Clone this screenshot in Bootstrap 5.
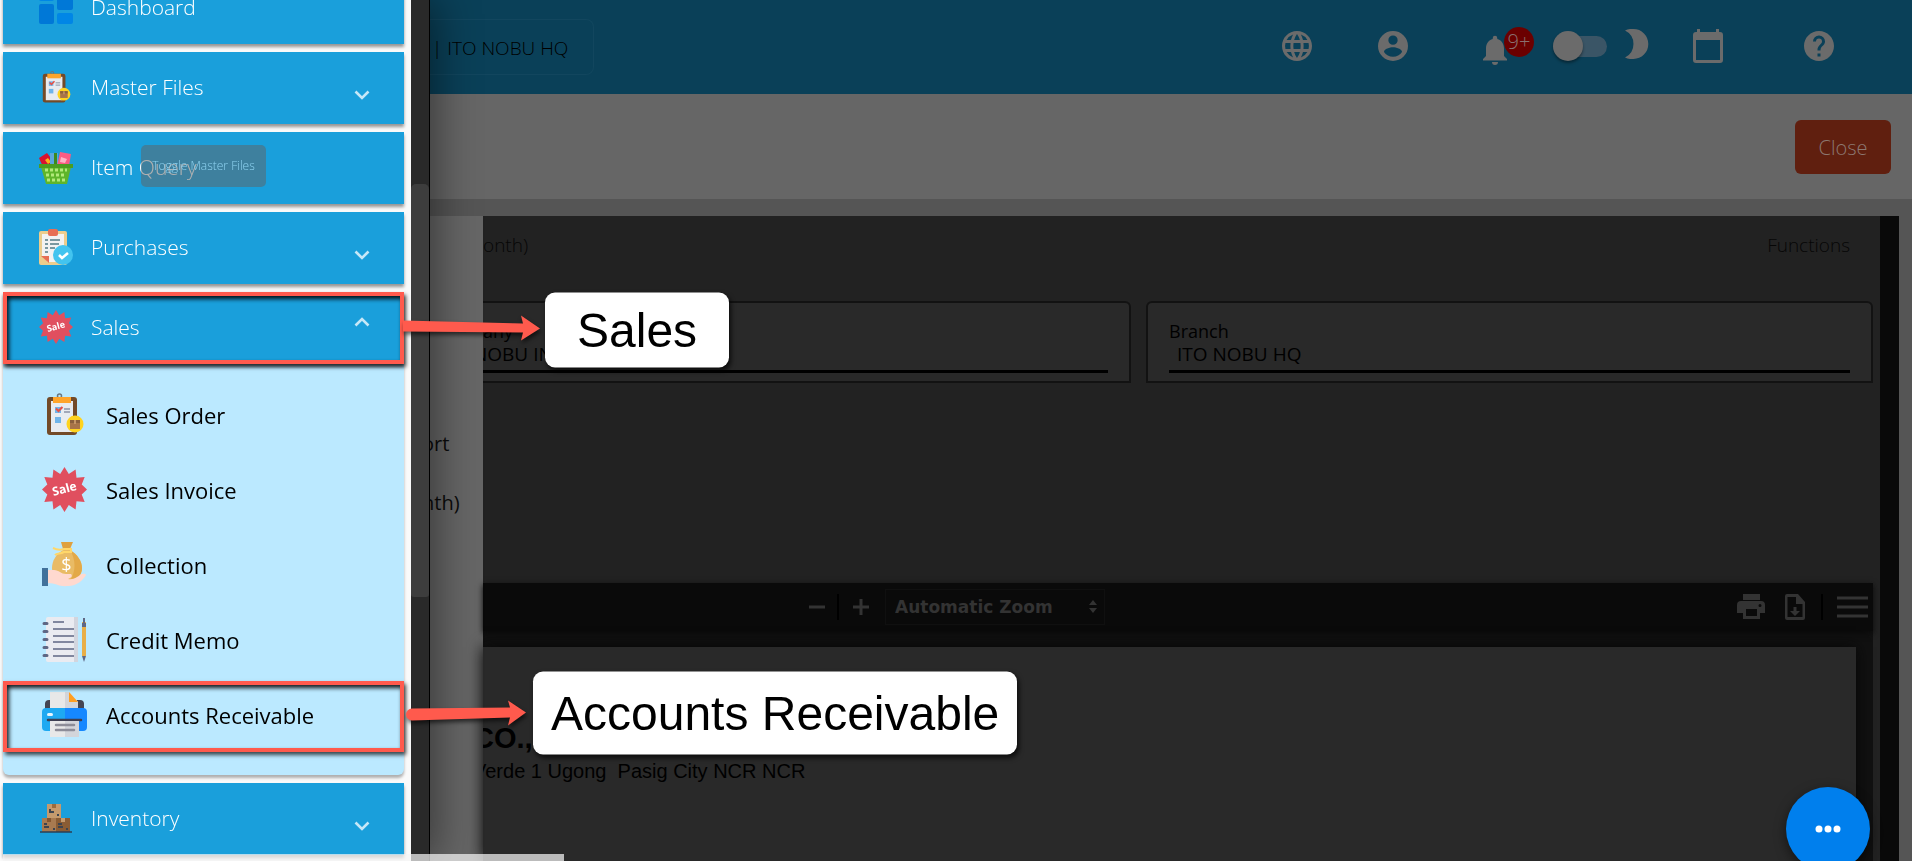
<!DOCTYPE html>
<html lang="en">
<head>
<meta charset="utf-8">
<meta name="viewport" content="width=device-width, initial-scale=1">
<title>Sales - Accounts Receivable</title>
<link href="https://cdn.jsdelivr.net/npm/bootstrap@5.3.0/dist/css/bootstrap.min.css" rel="stylesheet">
<style>
body{font-family:"Open Sans","Noto Sans",sans-serif;font-size:19px;font-weight:300;line-height:28px;color:#000;background:#555}
svg{display:block;flex-shrink:0}
button{font:inherit}
/* dimmed page */
.topbar{height:94px;background:#0a4058;color:#6b6b6b;padding-left:430px;padding-right:75px}
.site-box{height:56px;width:164px;border:1px solid #12465e;border-left:0;border-radius:0 8px 8px 0;color:#000;padding:1px 0 0 2px}
.tools{padding-bottom:2px}
.tools button,.viewer-bar button{background:none;border:0;padding:0;color:inherit}
.sp-globe{margin-right:12px}
.sp-user{margin-right:18px}
.sp-moon{margin-left:18px}
.sp-cal{margin-left:-4px}
.sp-help{margin-left:30px}
.notice{top:3px;left:27px;width:30px;height:30px;background:#6b0000;color:#8a7070;line-height:30px;border-radius:50%;font-size:20px}
.switch{appearance:none;width:54px;height:21px;border-radius:11px;background:#3a5566;position:relative;margin:0}
.switch::before{content:"";position:absolute;left:0;top:-5px;width:30px;height:30px;border-radius:50%;background:#6b6b6b;box-shadow:0 2px 3px rgba(0,0,0,.4)}
.actionbar{height:105px;background:#666;padding-right:21px}
.btn-close-page{width:96px;height:54px;background:#601f0f;color:#8c7871;border:0;border-radius:6px;font-size:20px;padding:2px 0 0}
.workspace{margin-top:17px;margin-right:13px;background:#222}
.report-nav{width:483px;background:#666;padding:214px 0 0 422px;font-size:20px;font-weight:400}
.report-nav a{color:#0b0b0b;text-decoration:none;line-height:28px;margin-bottom:31px}
.gutter{width:19px;background:#090909}
.report-head{height:85px;padding-top:15px;padding-right:30px;color:#060606}
.report-head a{color:#060606;text-decoration:none}
.fields{gap:15px;padding-right:7px}
.field-box{height:82px;background:#292929;border:2px solid #121212;border-radius:6px 6px 0 0;padding:16px 21px 0}
.field-first{flex:0 1 648px;border-left:0;border-top-left-radius:0;padding-left:0}
.field-box label{font-size:18px;line-height:24px;font-weight:400}
.field-box input{width:100%;height:30px;border:0;border-bottom:3px solid #000;background:none;padding:0 8px 6px;font-size:19px;line-height:22px;color:#000;outline:0;font-weight:400}
.field-box.field-first input{padding-left:0;text-indent:-10px}
.viewer{margin-top:200px;margin-right:7px;background:#111}
.viewer-bar{height:48px;background:#0a0a0a;color:#333;padding-left:326px;padding-right:5px;box-shadow:0 2px 6px #0a0a0a}
.viewer-bar select{appearance:none;border:1px solid #101010;background:none;color:#333;font:700 17px/24px "DejaVu Sans",sans-serif;width:220px;height:36px;padding:0 9px}
.rule{width:2px;height:26px;background:#000;margin-right:14px}
.sheet{margin:16px 17px 0 0;background:#292929;box-shadow:0 0 14px #060606;font-family:"Liberation Sans",Arial,sans-serif;font-weight:400;padding-top:74px;overflow:hidden}
.sheet h1{font-size:29px;line-height:34px;font-weight:700;margin:0;text-indent:-10px}
.sheet p{font-size:20px;line-height:32px;white-space:pre;margin:0;text-indent:-10px}
.fab{right:42px;bottom:-10px;width:84px;height:84px;border-radius:50%;background:#007fed;border:0;box-shadow:0 4px 12px rgba(0,0,0,.5);z-index:3}
/* drawer */
.drawer{width:430px;background:#fafafa;border-right:1px solid #000;box-shadow:6px 0 40px rgba(0,0,0,.45);z-index:5}
.drawer-list{margin:-28px 7px 0 3px;gap:8px}
.scroll-track{width:18px;background:#292929;padding-top:184px}
.scroll-thumb{height:48vh;background:#3d3d3d;border-radius:5px 5px 3px 3px}
.entry{height:72px;background:#1a9fdb;color:#fff;font-size:21px;box-shadow:0 3px 3px rgba(0,0,0,.4);text-decoration:none;border:0;padding:0 34px 2px 36px;gap:18px;text-align:left;width:100%}
.entry .caret-ico{margin-top:16px}
.entry-open .caret-ico{margin-top:-10px}
.entry svg.entry-ico{width:34px;height:36px}
.submenu{background:#bbe9ff;padding:13px 0 23px;border-radius:0 0 6px 6px;box-shadow:0 3px 3px rgba(0,0,0,.3)}
.sub-link{height:75px;padding-left:39px;gap:19px;color:#000;font-size:22px;font-weight:400;text-decoration:none}
.tip{left:138px;top:13px;width:125px;height:42px;border-radius:5px;background:rgba(97,97,97,.5);color:#8fd3f2;font-size:12px;line-height:42px}
.mark-box{inset:0;border:4px solid #ff5a4d;box-shadow:2px 3px 4px rgba(0,0,0,.7),inset 2px 3px 4px rgba(0,0,0,.9);pointer-events:none}
.submenu .mark-box{top:4px}
.callout-row{left:400px;top:50%;transform:translateY(-50%)}
.submenu .callout-row{top:36px}
.callout-row svg{filter:drop-shadow(1px 3px 2px rgba(0,0,0,.6))}
.callout-txt{background:#fff;color:#000;border-radius:10px;font:400 48px/59px "Liberation Sans",Arial,sans-serif;white-space:nowrap;box-shadow:2px 3px 5px rgba(0,0,0,.7);padding:8px 32px}
.submenu .callout-txt{padding:12px 18px}
.status-strip{left:3px;bottom:0;width:561px;height:7px;background:rgba(244,244,244,.72);z-index:6}
</style>
</head>
<body class="vh-100 overflow-hidden">

<svg width="0" height="0" class="position-absolute" aria-hidden="true">
  <symbol id="i-order" viewBox="2 0 45 45">
    <circle cx="19.500" cy="4" r="2" fill="none" stroke="#6b7780" stroke-width="1.500"/>
    <rect x="7" y="5" width="30" height="38" rx="3" fill="#734a28"/><rect x="11" y="9" width="22" height="31" fill="#e8ebf0"/>
    <rect x="13" y="5" width="18" height="6" fill="#ffa42b"/>
    <rect x="15" y="15" width="6" height="6" fill="#6fb4ea"/><path d="M16 16.500l2.500 2.500 4-4" stroke="#e75046" stroke-width="2" fill="none"/>
    <rect x="15" y="25" width="6" height="6" fill="#6fb4ea"/><path d="M24 17h6M24 20h6" stroke="#8b93a6" stroke-width="1.300"/>
    <circle cx="35" cy="32" r="8.500" fill="#ffd31f"/><rect x="30" y="28" width="10" height="9" fill="#a87449"/><path d="M30 28h10v3H30z" fill="#8a5f3c"/><path d="M34 28h2v4h-2z" fill="#c59566"/>
  </symbol>
  <symbol id="i-sale" viewBox="0 0 45 45">
    <path fill="#e04f5f" d="M22.500 0l4.300 7 6.800-4.400.9 8.200 8.200-.9-3 7.700 5.300 4.900-5.300 4.900 3 7.700-8.200-.9-.9 8.200-6.800-4.400-4.300 7-4.300-7-6.800 4.400-.9-8.200-8.200.9 3-7.700L0 22.500l5.300-4.900-3-7.700 8.200.9.900-8.200 6.800 4.400z"/>
    <text x="22.500" y="26" transform="rotate(-15 22.500 22.500)" text-anchor="middle" font-family="Open Sans,sans-serif" font-weight="700" font-size="12" fill="#fff">Sale</text>
  </symbol>
  <symbol id="i-chev" viewBox="0 0 16 10"><path d="M1.500 1.500L8 8l6.500-6.500" fill="none" stroke="#c6e7f7" stroke-width="2.600"/></symbol>
</svg>

<div class="d-flex flex-column h-100">
  <header class="topbar d-flex align-items-center flex-shrink-0">
    <div class="site-box d-flex align-items-center text-nowrap">| ITO NOBU HQ</div>
    <div class="tools d-flex align-items-center ms-auto">
      <button type="button" aria-label="Language" class="me-5"><svg width="36" height="36" viewBox="0 0 24 24" fill="currentColor" class="sp-globe"><path d="M12 2C6.480 2 2 6.480 2 12s4.480 10 10 10 10-4.480 10-10S17.520 2 12 2zm6.900 6h-2.900c-.3-1.300-.8-2.400-1.400-3.600A8 8 0 0 1 18.900 8zM12 4c.8 1.200 1.500 2.500 1.900 4h-3.800c.4-1.500 1.100-2.800 1.900-4zM4.300 14a8 8 0 0 1 0-4h3.400a16.500 16.500 0 0 0 0 4H4.300zm.8 2H8c.3 1.300.8 2.400 1.400 3.600A8 8 0 0 1 5.100 16zM8 8H5.100a8 8 0 0 1 4.300-3.600C8.800 5.600 8.300 6.700 8 8zm4 12c-.8-1.200-1.500-2.500-1.900-4h3.800c-.4 1.500-1.100 2.800-1.900 4zm2.300-6H9.700a14.700 14.700 0 0 1 0-4h4.600a14.700 14.700 0 0 1 0 4zm.3 5.600c.6-1.200 1.100-2.300 1.400-3.600h2.900a8 8 0 0 1-4.300 3.600zm1.700-5.600a16.500 16.500 0 0 0 0-4h3.400a8 8 0 0 1 0 4z"/></svg></button>
      <button type="button" aria-label="Account" class="me-5 ms-n1"><svg width="36" height="36" viewBox="0 0 24 24" fill="currentColor" class="sp-user"><path fill-rule="evenodd" d="M12 2a10 10 0 1 0 0 20 10 10 0 0 0 0-20zm0 3a3 3 0 1 1 0 6.200A3 3 0 0 1 12 5zm0 14.200a7.200 7.200 0 0 1-6-3.200c0-2 4-3.100 6-3.100s6 1.100 6 3.100a7.200 7.200 0 0 1-6 3.200z"/></svg></button>
      <button type="button" aria-label="Notifications" class="position-relative me-4"><svg width="36" height="36" viewBox="0 0 24 24" fill="currentColor" class="mt-2"><path d="M12 22a2 2 0 0 0 2-2h-4a2 2 0 0 0 2 2zm6-6v-5c0-3.070-1.640-5.640-4.500-6.320V4a1.500 1.500 0 0 0-3 0v.68C7.630 5.360 6 7.920 6 11v5l-2 2v1h16v-1z"/></svg><span class="notice position-absolute">9+</span></button>
      <input type="checkbox" class="switch ms-3" aria-label="Dark mode">
      <svg width="24" height="30" viewBox="0 0 24 30" class="sp-moon mb-1" fill="currentColor" role="img" aria-label="Dark"><path d="M0 1.500A15 15 0 0 1 8.500 0a14.800 15 0 0 1 0 30A15 15 0 0 1 0 28.500a15 15 0 0 0 0-27z"/></svg>
      <button type="button" aria-label="Calendar" class="ms-5"><svg width="30" height="34" viewBox="0 0 30 34" fill="currentColor" class="sp-cal"><path fill-rule="evenodd" d="M4 0h3v3h16V0h3v3h1a3 3 0 0 1 3 3v25a3 3 0 0 1-3 3H3a3 3 0 0 1-3-3V6a3 3 0 0 1 3-3h1zM3 11v20h24V11z"/></svg></button>
      <button type="button" aria-label="Help" class="ms-5"><svg width="36" height="36" viewBox="0 0 24 24" fill="currentColor" class="sp-help"><path d="M12 2C6.480 2 2 6.480 2 12s4.480 10 10 10 10-4.480 10-10S17.520 2 12 2zm1 17h-2v-2h2v2zm2.070-7.750l-.9.920C13.450 12.900 13 13.500 13 15h-2v-.5c0-1.100.450-2.100 1.170-2.830l1.240-1.260c.370-.360.590-.860.590-1.410a2 2 0 0 0-4 0H8a4 4 0 0 1 8 0c0 .880-.360 1.680-.930 2.250z"/></svg></button>
    </div>
  </header>

  <div class="actionbar d-flex align-items-center justify-content-end flex-shrink-0">
    <button type="button" class="btn-close-page">Close</button>
  </div>

  <main class="workspace d-flex flex-grow-1">
    <nav class="report-nav d-flex flex-column flex-shrink-0" aria-label="Reports">
      <a href="#">ort</a>
      <a href="#">nth)</a>
    </nav>
    <div class="d-flex flex-column flex-grow-1">
      <div class="report-head d-flex justify-content-between"><span>onth)</span><a href="#">Functions</a></div>
      <div class="fields d-flex">
        <div class="field-box field-first d-flex flex-column"><label for="company">any</label><input id="company" value="NOBU IN"></div>
        <div class="field-box d-flex flex-column flex-grow-1"><label for="branch">Branch</label><input id="branch" value="ITO NOBU HQ"></div>
      </div>
      <section class="viewer d-flex flex-column flex-grow-1">
        <div class="viewer-bar d-flex align-items-center flex-shrink-0">
          <button type="button" aria-label="Zoom out" class="me-2"><svg width="16" height="16"><path d="M0 8h16" stroke="currentColor" stroke-width="3"/></svg></button>
          <span class="rule ms-1"></span>
          <button type="button" aria-label="Zoom in"><svg width="16" height="16"><path d="M0 8h16M8 0v16" stroke="currentColor" stroke-width="3"/></svg></button>
          <div class="position-relative ms-3">
            <select aria-label="Zoom"><option>Automatic Zoom</option></select>
            <svg width="8" height="14" class="position-absolute top-50 end-0 translate-middle-y me-2" fill="#333"><path d="M0 5l4-5 4 5zM0 8l4 5 4-5z"/></svg>
          </div>
          <div class="d-flex align-items-center ms-auto">
            <button type="button" aria-label="Print" class="me-3"><svg width="28" height="26" viewBox="0 0 28 26" fill="currentColor"><path fill-rule="evenodd" d="M6 0h17v6H6zM4 7h20a4 4 0 0 1 4 4v8h-5v6H6v-6H0v-8a4 4 0 0 1 4-4zm5 8v7h11v-7zm14-5a1.500 1.500 0 1 0 0 3 1.500 1.500 0 0 0 0-3z"/></svg></button>
            <button type="button" aria-label="Save" class="ms-1 me-3"><svg width="20" height="26" viewBox="0 0 20 26" fill="currentColor"><path fill-rule="evenodd" d="M2 0h11l7 8v16a2 2 0 0 1-2 2H2a2 2 0 0 1-2-2V2a2 2 0 0 1 2-2zm.500 3v20h15V10H11V3zM8.500 13h3v4H15l-5 5-5-5h3.500z"/></svg></button>
            <span class="rule"></span>
            <button type="button" aria-label="Tools"><svg width="31" height="22"><path d="M0 2h31M0 11h31M0 20h31" stroke="currentColor" stroke-width="3"/></svg></button>
          </div>
        </div>
        <article class="sheet flex-grow-1">
          <h1>CO.,</h1>
          <p>Verde 1 Ugong  Pasig City NCR NCR</p>
        </article>
      </section>
    </div>
    <div class="gutter"></div>
  </main>
</div>

<button type="button" class="fab position-fixed d-flex align-items-center justify-content-center" aria-label="More actions"><svg width="26" height="8" fill="#fff"><circle cx="4" cy="4" r="3.500"/><circle cx="13" cy="4" r="3.500"/><circle cx="22" cy="4" r="3.500"/></svg></button>

<aside class="drawer position-fixed top-0 start-0 vh-100 d-flex">
  <nav class="drawer-list d-flex flex-column flex-grow-1" aria-label="Main menu">
    <a href="#" class="entry d-flex align-items-center flex-shrink-0">
      <svg class="entry-ico" viewBox="0 0 34 36"><g fill="#0078d7"><rect x="0" y="15" width="15" height="20" rx="2"/><rect x="18" y="1" width="16" height="20" rx="2"/></g><g fill="#0086e6"><rect x="0" y="1" width="15" height="11" rx="2"/><rect x="18" y="24" width="16" height="11" rx="2"/></g></svg>
      <span>Dashboard</span></a>
    <button type="button" class="entry d-flex align-items-center flex-shrink-0">
      <svg class="entry-ico"><use href="#i-order"/></svg><span class="flex-grow-1">Master Files</span><svg class="caret-ico" width="16" height="10"><use href="#i-chev"/></svg></button>
    <div class="position-relative">
      <a href="#" class="entry d-flex align-items-center">
        <svg class="entry-ico" viewBox="0 0 34 36"><path d="M0 9l8-5 7 9-3 5H4z" fill="#d8122f"/><path d="M6 11l3-2 3 4-3 2z" fill="#f9b01b"/><path d="M11 4h8v12h-8z" fill="#5aa7dc"/><path d="M21 3l11 2-2 12H18z" fill="#fb5c83"/><path d="M22 8l6 2-2 4-5-1z" fill="#ffb3c6"/><rect x="15" y="4" width="3" height="14" fill="#3c8a1c"/><path d="M2 18h30l-4 17H7z" fill="#5fb52a"/><path d="M0 15h34v4H0z" fill="#4c9d20"/><path d="M6 21h22M7 26h20M8 31h18" stroke="#b2ea79" stroke-width="3" stroke-dasharray="3 2"/></svg>
        <span>Item Query</span></a>
      <span class="tip position-absolute text-center text-nowrap" role="tooltip">Toggle Master Files</span>
    </div>
    <button type="button" class="entry d-flex align-items-center flex-shrink-0">
      <svg class="entry-ico" viewBox="0 0 34 36"><rect x="0" y="2" width="28" height="34" rx="2" fill="#eccd8d"/><path d="M3 5h22v28H9l-6-6z" fill="#f2f2f2"/><path d="M2 27h8v7z" fill="#e76e54"/><rect x="9" y="0" width="10" height="7" rx="2" fill="#e76e54"/><path d="M6 11h3M11 11h10M6 15h3M11 15h9M6 19h3M11 19h5M6 23h3" stroke="#7a98a0" stroke-width="2"/><circle cx="24" cy="26" r="10" fill="#43c4ef"/><path d="M20 26l3 3 6-5" fill="none" stroke="#fff" stroke-width="2.500"/></svg>
      <span class="flex-grow-1">Purchases</span><svg class="caret-ico" width="16" height="10"><use href="#i-chev"/></svg></button>
    <div>
      <div class="position-relative">
        <button type="button" class="entry entry-open d-flex align-items-center" aria-expanded="true">
          <svg class="entry-ico"><use href="#i-sale"/></svg><span class="flex-grow-1">Sales</span><svg class="caret-ico" width="16" height="10" viewBox="0 0 16 10"><path d="M1.500 8.500L8 2l6.500 6.500" fill="none" stroke="#c6e7f7" stroke-width="2.600"/></svg></button>
        <span class="mark-box position-absolute"></span>
        <div class="callout-row position-absolute d-flex align-items-center">
          <svg width="142" height="28" viewBox="0 0 142 28" fill="#ff5a4d"><path d="M0 6l120 3-2-8 19 13-19 12 2-8L0 17z"/></svg>
          <div class="callout-txt mt-1">Sales</div>
        </div>
      </div>
      <div class="submenu">
        <a href="#" class="sub-link d-flex align-items-center"><svg width="45" height="45"><use href="#i-order"/></svg>Sales Order</a>
        <a href="#" class="sub-link d-flex align-items-center"><svg width="45" height="45"><use href="#i-sale"/></svg>Sales Invoice</a>
        <a href="#" class="sub-link d-flex align-items-center"><svg width="45" height="45" viewBox="0 0 45 45"><path d="M19 0h12l-3 7h-7z" fill="#dfa13f"/><path d="M21 8h7c7 4 12 11 12 18 0 8-6 13-15 13-10 0-15-5-15-13 0-7 4-14 11-18z" fill="#e9bb65"/><path d="M28 8c7 4 12 11 12 18 0 7-5 12-12 13 6-10 6-21 0-31z" fill="#e3a948"/><path d="M11 6c4 2 8 2 11 1l7 0v3h-7c-4 2-7 1-9 3" fill="none" stroke="#ffd76a" stroke-width="2"/><text x="24.500" y="29" text-anchor="middle" font-family="Open Sans,sans-serif" font-size="18" font-weight="400" fill="#fff">$</text><path d="M6 28h6c5 0 7 4 12 4h5c2 2 0 4-3 5 6 1 9-2 12-4 3-2 6-1 6 0-3 5-9 11-18 11C17 45 14 41 6 41z" fill="#ffd9cf"/><rect x="0" y="26" width="6" height="18" fill="#41719b"/></svg>Collection</a>
        <a href="#" class="sub-link d-flex align-items-center"><svg width="45" height="45" viewBox="0 0 45 45"><rect x="4" y="0" width="32" height="45" rx="2" fill="#eaebf1"/><path d="M32 0h4v45h-4z" fill="#d2d5de"/><path d="M11 5h11M11 12h21M11 19h21M11 25h21M11 32h21M11 39h21" stroke="#5f6784" stroke-width="1.400"/><path d="M2 6.500h3M2 14.500h3M2 22.500h3M2 30.500h3M2 38.500h3" stroke="#5f6784" stroke-width="3" stroke-linecap="round"/><path d="M40 5h4v34h-4z" fill="#e8ae47"/><path d="M41 1h2v5h1v4h-4V6h1zM40 39h4l-2 6z" fill="#5f6784"/></svg>Credit Memo</a>
        <div class="position-relative">
          <a href="#" class="sub-link d-flex align-items-center"><svg width="45" height="45" viewBox="0 0 45 45"><path d="M3 18v-6a4 4 0 0 1 4-4h31a4 4 0 0 1 4 4v6z" fill="#454552"/><path d="M8 0h19l9 10v8H8z" fill="#e8e8e8"/><path d="M23 0h4l9 10v8H23z" fill="#d3d5da"/><path d="M27 0l9 10h-9z" fill="#ff9f22"/><path d="M4 16h19v23H4a4 4 0 0 1-4-4V20a4 4 0 0 1 4-4z" fill="#1ea9f2"/><path d="M23 16h18a4 4 0 0 1 4 4v15a4 4 0 0 1-4 4H23z" fill="#1688ff"/><rect x="5" y="21" width="6" height="3" rx="1.500" fill="#e6f6ff"/><path d="M6 28h33" stroke="#3d3f52" stroke-width="2.500" stroke-linecap="round"/><path d="M8 29h29v16H8z" fill="#e8e8e8"/><path d="M23 29h14v16H23z" fill="#d3d5da"/><path d="M14 33h18M14 38h18" stroke="#8d8d98" stroke-width="2.500" stroke-linecap="round"/></svg>Accounts Receivable</a>
          <span class="mark-box position-absolute"></span>
          <div class="callout-row position-absolute d-flex align-items-center">
            <svg width="130" height="28" viewBox="0 0 130 28" fill="#ff5a4d"><path d="M9 9l98-1-2-7 18 12-18 13 2-8L9 21a6 6 0 0 1 0-12z"/></svg>
            <div class="callout-txt">Accounts Receivable</div>
          </div>
        </div>
      </div>
    </div>
    <button type="button" class="entry d-flex align-items-center flex-shrink-0">
      <svg class="entry-ico" viewBox="0 0 34 36"><rect x="8" y="4" width="14" height="14" fill="#c59a6d"/><path d="M13 4h4v4h-4z" fill="#9a6b3f"/><rect x="3" y="18" width="14" height="14" fill="#a87a50"/><rect x="17" y="18" width="14" height="14" fill="#8a5c34"/><path d="M8 18h4v4H8z" fill="#84552f"/><path d="M22 18h4v4h-4z" fill="#c59a6d"/><path d="M10 10h2M10 12h5M5 24h3M5 27h5M19 24h4M19 27h5M18 15h2M14 29h2M27 29h2" stroke="#3d4450" stroke-width="2"/><path d="M1 32h32" stroke="#2b3f55" stroke-width="1.500"/></svg>
      <span class="flex-grow-1">Inventory</span><svg class="caret-ico" width="16" height="10"><use href="#i-chev"/></svg></button>
  </nav>
  <div class="scroll-track flex-shrink-0"><div class="scroll-thumb"></div></div>
</aside>
<div class="status-strip position-fixed"></div>

<script src="https://cdn.jsdelivr.net/npm/bootstrap@5.3.0/dist/js/bootstrap.bundle.min.js"></script>
</body>
</html>
